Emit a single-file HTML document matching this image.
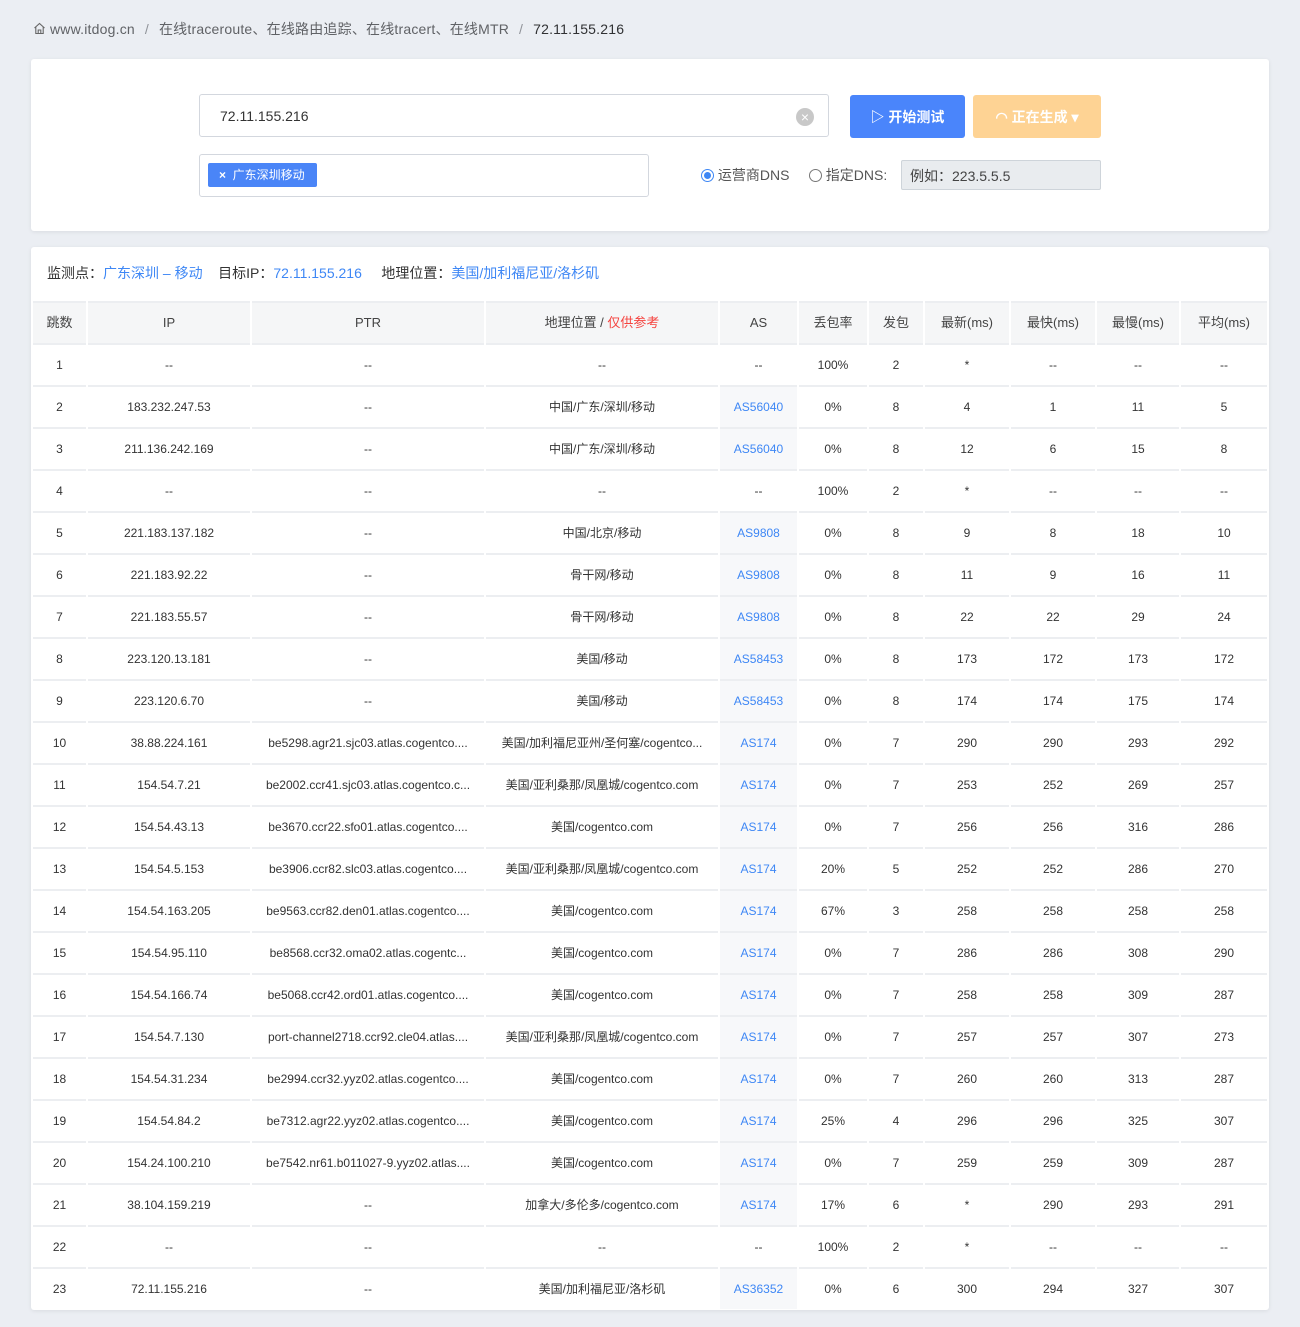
<!DOCTYPE html>
<html><head><meta charset="utf-8">
<style>
*{box-sizing:border-box;margin:0;padding:0}
body{width:1300px;height:1327px;background:#ebeef3;font-family:"Liberation Sans","Noto Sans CJK SC",sans-serif;color:#333;overflow:hidden;position:relative}
.bc{position:absolute;left:33px;top:19px;font-size:14px;color:#606266;line-height:20px;letter-spacing:.2px}
.bc b{font-weight:normal;color:#303133}
.bc .s{margin:0 10px;color:#909399}
.card{position:absolute;left:31px;width:1238px;background:#fff;border-radius:3px;box-shadow:0 1px 4px rgba(0,0,0,.08)}
.in{position:absolute;border:1px solid #d3d7de;border-radius:3px;background:#fff}
.btn{position:absolute;top:36px;height:43px;border-radius:3px;color:#fff;font-size:14px;font-weight:bold;display:flex;align-items:center;justify-content:center}
.info{position:absolute;left:16px;top:16px;font-size:14px;color:#333}
.info a{color:#3e87f5;text-decoration:none}
table{position:absolute;left:0;top:54px;width:1238px;border-collapse:separate;border-spacing:2px 0;table-layout:fixed}
td,th{text-align:center;font-size:12px;height:42px;border-top:2px solid #eceef1;white-space:nowrap;overflow:hidden;padding:0 3px;line-height:40px}
th{font-weight:normal;font-size:13px;background:#f5f6f7;color:#444;height:42px}
td:nth-child(5){background:#f7f8fa}
td:nth-child(5) span{color:#3e87f5}
</style></head><body>
<div class="bc"><svg width="13" height="13" viewBox="0 0 13 13" style="vertical-align:-1px;margin-right:4px"><path d="M1.5 6L6.5 1.5L11.5 6M2.8 5v6.5h7.4V5M5.2 11.5V8h2.6v3.5" fill="none" stroke="#666" stroke-width="1.1"/></svg>www.itdog.cn<span class="s">/</span>在线traceroute、在线路由追踪、在线tracert、在线MTR<span class="s">/</span><b>72.11.155.216</b></div>

<div class="card" style="top:59px;height:172px">
 <div class="in" style="left:168px;top:35px;width:630px;height:43px;font-size:14px;padding:13px 20px;color:#333">72.11.155.216
  <div style="position:absolute;right:14px;top:13px;width:18px;height:18px;border-radius:50%;background:#c8c8c8;color:#fff;font-size:14px;line-height:18px;text-align:center">×</div></div>
 <div class="in" style="left:168px;top:95px;width:450px;height:43px">
  <div style="position:absolute;left:8px;top:8px;height:24px;width:109px;background:#4a85f7;border-radius:2px;color:#fff;font-size:12px;line-height:24px;padding-left:11px"><b>×</b>&nbsp;&nbsp;广东深圳移动</div></div>
 <div class="btn" style="left:819px;width:115px;background:#4a85fb">▷ 开始测试</div>
 <div class="btn" style="left:942px;width:128px;background:#fed394">◠ 正在生成 ▾</div>
 <div style="position:absolute;left:670px;top:107px;font-size:14px;color:#555;line-height:18px">
  <span style="display:inline-block;width:13px;height:13px;border-radius:50%;border:1px solid #3e87f5;vertical-align:-2px;position:relative"><span style="position:absolute;left:2px;top:2px;width:7px;height:7px;border-radius:50%;background:#3e87f5"></span></span> 运营商DNS&nbsp;&nbsp;&nbsp;&nbsp;
  <span style="display:inline-block;width:13px;height:13px;border-radius:50%;border:1px solid #777;vertical-align:-2px"></span> 指定DNS:</div>
 <div style="position:absolute;left:870px;top:101px;width:200px;height:30px;background:#e9ecef;border:1px solid #ced4da;border-radius:2px;font-size:14px;padding:5px 8px;color:#444">例如：223.5.5.5</div>
</div>

<div class="card" style="top:247px;height:1063px">
 <div class="info">监测点：<a>广东深圳 – 移动</a>&nbsp;&nbsp;&nbsp;&nbsp;目标IP：<a>72.11.155.216</a>&nbsp;&nbsp;&nbsp;&nbsp;&nbsp;地理位置：<a>美国/加利福尼亚/洛杉矶</a></div>
 <table>
 <colgroup><col style="width:53px"><col style="width:162px"><col style="width:232px"><col style="width:232px"><col style="width:77px"><col style="width:68px"><col style="width:54px"><col style="width:84px"><col style="width:84px"><col style="width:82px"><col style="width:86px"></colgroup>
 <tr><th>跳数</th><th>IP</th><th>PTR</th><th>地理位置 / <span style="color:#f5433f">仅供参考</span></th><th>AS</th><th>丢包率</th><th>发包</th><th>最新(ms)</th><th>最快(ms)</th><th>最慢(ms)</th><th>平均(ms)</th></tr>
 <tr><td>1</td><td>--</td><td>--</td><td>--</td><td style="background:none">--</td><td>100%</td><td>2</td><td>*</td><td>--</td><td>--</td><td>--</td></tr>
 <tr><td>2</td><td>183.232.247.53</td><td>--</td><td>中国/广东/深圳/移动</td><td><span>AS56040</span></td><td>0%</td><td>8</td><td>4</td><td>1</td><td>11</td><td>5</td></tr>
 <tr><td>3</td><td>211.136.242.169</td><td>--</td><td>中国/广东/深圳/移动</td><td><span>AS56040</span></td><td>0%</td><td>8</td><td>12</td><td>6</td><td>15</td><td>8</td></tr>
 <tr><td>4</td><td>--</td><td>--</td><td>--</td><td style="background:none">--</td><td>100%</td><td>2</td><td>*</td><td>--</td><td>--</td><td>--</td></tr>
 <tr><td>5</td><td>221.183.137.182</td><td>--</td><td>中国/北京/移动</td><td><span>AS9808</span></td><td>0%</td><td>8</td><td>9</td><td>8</td><td>18</td><td>10</td></tr>
 <tr><td>6</td><td>221.183.92.22</td><td>--</td><td>骨干网/移动</td><td><span>AS9808</span></td><td>0%</td><td>8</td><td>11</td><td>9</td><td>16</td><td>11</td></tr>
 <tr><td>7</td><td>221.183.55.57</td><td>--</td><td>骨干网/移动</td><td><span>AS9808</span></td><td>0%</td><td>8</td><td>22</td><td>22</td><td>29</td><td>24</td></tr>
 <tr><td>8</td><td>223.120.13.181</td><td>--</td><td>美国/移动</td><td><span>AS58453</span></td><td>0%</td><td>8</td><td>173</td><td>172</td><td>173</td><td>172</td></tr>
 <tr><td>9</td><td>223.120.6.70</td><td>--</td><td>美国/移动</td><td><span>AS58453</span></td><td>0%</td><td>8</td><td>174</td><td>174</td><td>175</td><td>174</td></tr>
 <tr><td>10</td><td>38.88.224.161</td><td>be5298.agr21.sjc03.atlas.cogentco....</td><td>美国/加利福尼亚州/圣何塞/cogentco...</td><td><span>AS174</span></td><td>0%</td><td>7</td><td>290</td><td>290</td><td>293</td><td>292</td></tr>
 <tr><td>11</td><td>154.54.7.21</td><td>be2002.ccr41.sjc03.atlas.cogentco.c...</td><td>美国/亚利桑那/凤凰城/cogentco.com</td><td><span>AS174</span></td><td>0%</td><td>7</td><td>253</td><td>252</td><td>269</td><td>257</td></tr>
 <tr><td>12</td><td>154.54.43.13</td><td>be3670.ccr22.sfo01.atlas.cogentco....</td><td>美国/cogentco.com</td><td><span>AS174</span></td><td>0%</td><td>7</td><td>256</td><td>256</td><td>316</td><td>286</td></tr>
 <tr><td>13</td><td>154.54.5.153</td><td>be3906.ccr82.slc03.atlas.cogentco....</td><td>美国/亚利桑那/凤凰城/cogentco.com</td><td><span>AS174</span></td><td>20%</td><td>5</td><td>252</td><td>252</td><td>286</td><td>270</td></tr>
 <tr><td>14</td><td>154.54.163.205</td><td>be9563.ccr82.den01.atlas.cogentco....</td><td>美国/cogentco.com</td><td><span>AS174</span></td><td>67%</td><td>3</td><td>258</td><td>258</td><td>258</td><td>258</td></tr>
 <tr><td>15</td><td>154.54.95.110</td><td>be8568.ccr32.oma02.atlas.cogentc...</td><td>美国/cogentco.com</td><td><span>AS174</span></td><td>0%</td><td>7</td><td>286</td><td>286</td><td>308</td><td>290</td></tr>
 <tr><td>16</td><td>154.54.166.74</td><td>be5068.ccr42.ord01.atlas.cogentco....</td><td>美国/cogentco.com</td><td><span>AS174</span></td><td>0%</td><td>7</td><td>258</td><td>258</td><td>309</td><td>287</td></tr>
 <tr><td>17</td><td>154.54.7.130</td><td>port-channel2718.ccr92.cle04.atlas....</td><td>美国/亚利桑那/凤凰城/cogentco.com</td><td><span>AS174</span></td><td>0%</td><td>7</td><td>257</td><td>257</td><td>307</td><td>273</td></tr>
 <tr><td>18</td><td>154.54.31.234</td><td>be2994.ccr32.yyz02.atlas.cogentco....</td><td>美国/cogentco.com</td><td><span>AS174</span></td><td>0%</td><td>7</td><td>260</td><td>260</td><td>313</td><td>287</td></tr>
 <tr><td>19</td><td>154.54.84.2</td><td>be7312.agr22.yyz02.atlas.cogentco....</td><td>美国/cogentco.com</td><td><span>AS174</span></td><td>25%</td><td>4</td><td>296</td><td>296</td><td>325</td><td>307</td></tr>
 <tr><td>20</td><td>154.24.100.210</td><td>be7542.nr61.b011027-9.yyz02.atlas....</td><td>美国/cogentco.com</td><td><span>AS174</span></td><td>0%</td><td>7</td><td>259</td><td>259</td><td>309</td><td>287</td></tr>
 <tr><td>21</td><td>38.104.159.219</td><td>--</td><td>加拿大/多伦多/cogentco.com</td><td><span>AS174</span></td><td>17%</td><td>6</td><td>*</td><td>290</td><td>293</td><td>291</td></tr>
 <tr><td>22</td><td>--</td><td>--</td><td>--</td><td style="background:none">--</td><td>100%</td><td>2</td><td>*</td><td>--</td><td>--</td><td>--</td></tr>
 <tr><td>23</td><td>72.11.155.216</td><td>--</td><td>美国/加利福尼亚/洛杉矶</td><td><span>AS36352</span></td><td>0%</td><td>6</td><td>300</td><td>294</td><td>327</td><td>307</td></tr>
 </table>
</div>
</body></html>
